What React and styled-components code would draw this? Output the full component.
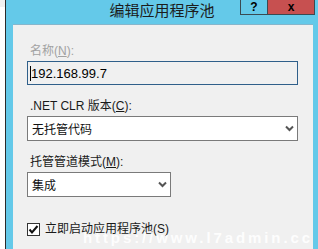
import React from "react";
import styled, { createGlobalStyle } from "styled-components";

const GlobalStyle = createGlobalStyle`
  html, body {
    margin: 0;
    padding: 0;
    background: #ffffff;
    overflow: hidden;
  }
  body {
    font-family: "Liberation Sans", "Noto Sans CJK SC", sans-serif;
  }
`;

const Page = styled.div`
  position: relative;
  display: flex;
  width: 318px;
  height: 249px;
  overflow: hidden;
`;

const BehindStrip = styled.div`
  width: 5px;
  background: linear-gradient(#f0f0f0 0 7px, #ffffff 7px);
  border-right: 1px solid #2b2b2b;
`;

const Window = styled.div`
  flex: 1;
  display: flex;
  flex-direction: column;
  background: #64c9e9;
`;

const TitleBar = styled.div`
  position: relative;
  height: 24px;
  display: flex;
  justify-content: center;
`;

const Title = styled.div`
  font-family: "Noto Sans CJK SC", sans-serif;
  font-size: 15px;
  line-height: 20px;
  color: #1c1c1c;
`;

const Buttons = styled.div`
  position: absolute;
  top: 0;
  right: 3px;
  display: flex;
`;

const CaptionButton = styled.div`
  width: ${(p) => p.$w}px;
  height: 15px;
  box-sizing: border-box;
  display: flex;
  align-items: center;
  justify-content: center;
  background: ${(p) => p.$bg};
  border: 1px solid #3a4a52;
  border-top: none;
  ${(p) => (p.$last ? "border-left: none;" : "")}
  font-family: "Liberation Sans", sans-serif;
  font-weight: bold;
  font-size: 12px;
  color: #000;
`;

const Body = styled.div`
  flex: 1;
  margin: 0 5px 0 7px;
  background: #f0f0f0;
  border-top: 1px solid #86b6cc;
  padding: 18px 14px 0 14px;
  display: flex;
  flex-direction: column;
  align-items: flex-start;
  font-size: 12px;
`;

const Label = styled.div`
  padding-left: 3px;
  line-height: 16px;
  color: ${(p) => (p.$disabled ? "#a2a2a2" : "#1a1a1a")};
  margin-top: ${(p) => p.$top || 0}px;
  margin-bottom: ${(p) => p.$bottom || 2}px;
`;

const TextBox = styled.div`
  width: 271px;
  height: 24px;
  box-sizing: border-box;
  border: 1px solid #2f5f8a;
  background: #f0f0f0;
  display: flex;
  align-items: center;
  padding-left: 2px;
  font-size: 13px;
  color: #000;
`;

const Caret = styled.span`
  display: inline-block;
  width: 1px;
  height: 15px;
  background: #000;
`;

const Select = styled.div`
  width: ${(p) => p.$w}px;
  height: 25px;
  box-sizing: border-box;
  border: 1px solid #7a7a7a;
  background: #ffffff;
  display: flex;
  align-items: center;
  justify-content: space-between;
  padding: 0 3px 0 4px;
  font-size: 12px;
  color: #111;
`;

const CheckRow = styled.div`
  display: flex;
  align-items: center;
  gap: 5px;
  margin-top: 24px;
  line-height: 16px;
  color: #1a1a1a;
`;

const CheckBox = styled.div`
  width: 13px;
  height: 13px;
  box-sizing: border-box;
  border: 1px solid #333;
  background: #fff;
  display: flex;
  align-items: center;
  justify-content: center;
`;

const Watermark = styled.div`
  position: absolute;
  left: 83px;
  top: 229px;
  font-family: "Liberation Sans", sans-serif;
  font-weight: bold;
  font-size: 15px;
  letter-spacing: 2.9px;
  color: rgba(255, 255, 255, 0.9);
  white-space: nowrap;
`;

function Chevron() {
  return (
    <svg width="9" height="7" viewBox="0 0 9 7">
      <polyline points="1,1.5 4.5,5 8,1.5" fill="none" stroke="#555" strokeWidth="2" />
    </svg>
  );
}

function Check() {
  return (
    <svg width="11" height="11" viewBox="0 0 11 11">
      <polyline points="1.5,5.5 4,8.5 9.5,2" fill="none" stroke="#111" strokeWidth="2" />
    </svg>
  );
}

export default function App() {
  return (
    <Page>
      <GlobalStyle />
      <BehindStrip />
      <Window>
        <TitleBar>
          <Title>编辑应用程序池</Title>
          <Buttons>
            <CaptionButton $w={28} $bg="#64c9e9">?</CaptionButton>
            <CaptionButton $w={47} $bg="#c75050" $last>x</CaptionButton>
          </Buttons>
        </TitleBar>
        <Body>
          <Label $disabled>
            名称(<u>N</u>):
          </Label>
          <TextBox>
            <Caret />
            192.168.99.7
          </TextBox>
          <Label $top={13}>
            .NET CLR 版本(<u>C</u>):
          </Label>
          <Select $w={271}>
            无托管代码
            <Chevron />
          </Select>
          <Label $top={13}>
            托管管道模式(<u>M</u>):
          </Label>
          <Select $w={144}>
            集成
            <Chevron />
          </Select>
          <CheckRow>
            <CheckBox>
              <Check />
            </CheckBox>
            立即启动应用程序池(S)
          </CheckRow>
        </Body>
      </Window>
      <Watermark>https://www.l7admin.cc</Watermark>
    </Page>
  );
}
